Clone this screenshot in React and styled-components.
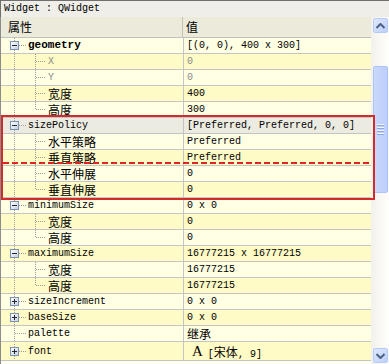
import React from "react"
import styled, { createGlobalStyle } from "styled-components"

const GlobalStyle = createGlobalStyle`
  html, body {
    margin: 0;
    padding: 0;
    background: #ece9d8;
  }
  body {
    width: 389px;
    height: 364px;
    overflow: hidden;
    font-family: "Liberation Mono", "Noto Sans CJK SC", monospace;
  }
`

const rows = [
  { name: "geometry", value: "[(0, 0), 400 x 300]", level: 0, kids: "open", bold: true },
  { name: "X", value: "0", level: 1, disabled: true },
  { name: "Y", value: "0", level: 1, disabled: true },
  { name: "宽度", value: "400", level: 1, cjk: true },
  { name: "高度", value: "300", level: 1, cjk: true, last: true },
  { name: "sizePolicy", value: "[Preferred, Preferred, 0, 0]", level: 0, kids: "open", selected: true },
  { name: "水平策略", value: "Preferred", level: 1, cjk: true },
  { name: "垂直策略", value: "Preferred", level: 1, cjk: true },
  { name: "水平伸展", value: "0", level: 1, cjk: true },
  { name: "垂直伸展", value: "0", level: 1, cjk: true, last: true },
  { name: "minimumSize", value: "0 x 0", level: 0, kids: "open" },
  { name: "宽度", value: "0", level: 1, cjk: true },
  { name: "高度", value: "0", level: 1, cjk: true, last: true },
  { name: "maximumSize", value: "16777215 x 16777215", level: 0, kids: "open" },
  { name: "宽度", value: "16777215", level: 1, cjk: true },
  { name: "高度", value: "16777215", level: 1, cjk: true, last: true },
  { name: "sizeIncrement", value: "0 x 0", level: 0, kids: "closed" },
  { name: "baseSize", value: "0 x 0", level: 0, kids: "closed" },
  { name: "palette", value: "继承", level: 0, cjkValue: true },
  { name: "font", value: "font", level: 0, kids: "closed", tall: true },
]

function Branch({ level, kids, last }) {
  const dot = { stroke: "#a0a0a0", strokeWidth: 1, strokeDasharray: "1 1" }
  if (level === 0) {
    return (
      <BranchSvg width="26" height="15" viewBox="0 0 26 15">
        <line x1="13.5" y1="0" x2="13.5" y2="15" {...dot} />
        <line x1="14" y1="7.5" x2="25" y2="7.5" {...dot} />
        {kids && (
          <g>
            <defs>
              <linearGradient id="bx" x1="0" y1="0" x2="1" y2="1">
                <stop offset="0" stopColor="#ffffff" />
                <stop offset="1" stopColor="#c6cfdb" />
              </linearGradient>
            </defs>
            <rect x="9.5" y="3.5" width="8" height="8" fill="url(#bx)" stroke="#7a94b4" />
            <rect x="11" y="7" width="5" height="1" fill="#1e2a3a" />
            {kids === "closed" && <rect x="13" y="5" width="1" height="5" fill="#1e2a3a" />}
          </g>
        )}
      </BranchSvg>
    )
  }
  return (
    <BranchSvg width="46" height="15" viewBox="0 0 46 15">
      <line x1="13.5" y1="0" x2="13.5" y2="15" {...dot} />
      <line x1="34.5" y1="0" x2="34.5" y2={last ? 7.5 : 15} {...dot} />
      <line x1="35" y1="7.5" x2="45" y2="7.5" {...dot} />
    </BranchSvg>
  )
}

export default function App() {
  return (
    <Panel>
      <GlobalStyle />
      <TitleBar>Widget : QWidget</TitleBar>
      <Body>
        <Tree>
          <Header>
            <HeaderCell $w={183}>属性</HeaderCell>
            <HeaderCell>值</HeaderCell>
          </Header>
          {rows.map((r, i) => (
            <Row key={i} $tone={r.selected ? "sel" : i % 2 ? "dark" : "light"} $tall={r.tall}>
              <NameCell>
                <Branch level={r.level} kids={r.kids} last={r.last} />
                <Name $cjk={r.cjk} $bold={r.bold} $disabled={r.disabled}>{r.name}</Name>
              </NameCell>
              <ValueCell $disabled={r.disabled}>
                {r.name === "font" ? (
                  <>
                    <FontGlyph>A</FontGlyph>
                    <span>[<Cjk>宋体</Cjk>, 9]</span>
                  </>
                ) : r.cjkValue ? (
                  <Cjk>{r.value}</Cjk>
                ) : (
                  r.value
                )}
              </ValueCell>
            </Row>
          ))}
        </Tree>
        <ScrollBar>
          <ScrollButton>
            <svg width="9" height="6" viewBox="0 0 9 6">
              <path d="M0.5 5 L4.5 1 L8.5 5" fill="none" stroke="#4d6185" strokeWidth="2" />
            </svg>
          </ScrollButton>
          <Track>
            <Thumb>
              <Grip />
              <Grip />
              <Grip />
              <Grip />
            </Thumb>
          </Track>
          <ScrollButton>
            <svg width="9" height="6" viewBox="0 0 9 6">
              <path d="M0.5 1 L4.5 5 L8.5 1" fill="none" stroke="#4d6185" strokeWidth="2" />
            </svg>
          </ScrollButton>
        </ScrollBar>
      </Body>
      <Highlight />
      <DashLine width="369" height="2">
        <line x1="0" y1="1" x2="369" y2="1" stroke="#e02424" strokeWidth="2" strokeDasharray="6 3" />
      </DashLine>
    </Panel>
  )
}

const Panel = styled.div`
  position: relative;
  width: 389px;
  height: 364px;
  display: flex;
  flex-direction: column;
  overflow: hidden;
  background: #ece9d8;
`

const TitleBar = styled.div`
  height: 16px;
  line-height: 16px;
  padding-left: 3px;
  border-top: 1px solid #6f6f6f;
  border-left: 1px solid #6f6f6f;
  background: #efeee8;
  font-size: 10px;
  color: #000;
  white-space: pre;
`

const Body = styled.div`
  flex: 1;
  display: flex;
  min-height: 0;
`

const Tree = styled.div`
  width: 370px;
  border-left: 1px solid #8c8c8c;
  display: flex;
  flex-direction: column;
  background: #fffff0;
`

const Header = styled.div`
  display: flex;
  height: 20px;
  border-bottom: 1px solid #c0c0c0;
  background: #ebeadb;
`

const HeaderCell = styled.div`
  ${(p) => (p.$w ? `width: ${p.$w - 1}px;` : "flex: 1;")}
  padding-left: ${(p) => (p.$w ? 7 : 3)}px;
  box-sizing: border-box;
  border-right: ${(p) => (p.$w ? "1px solid #c5c2b2" : "none")};
  font-family: "Noto Sans CJK SC", sans-serif;
  font-size: 12px;
  line-height: 20px;
  color: #000;
`

const toneColor = {
  light: "#ffffe4",
  dark: "#fffbc6",
  sel: "#ecebe1",
}

const Row = styled.div`
  display: flex;
  flex-shrink: 0;
  height: ${(p) => (p.$tall ? 18 : 15)}px;
  border-bottom: 1px solid #c4c4c4;
  background: ${(p) => toneColor[p.$tone]};
`

const NameCell = styled.div`
  width: 182px;
  display: flex;
  align-items: center;
  border-right: 1px solid #c4c4c4;
  overflow: hidden;
`

const BranchSvg = styled.svg`
  flex-shrink: 0;
  display: block;
`

const Name = styled.span`
  padding-left: 1px;
  font-family: ${(p) => (p.$cjk ? '"Noto Sans CJK SC", sans-serif' : '"Liberation Mono", monospace')};
  font-size: ${(p) => (p.$cjk ? 12 : p.$bold ? 11 : 10)}px;
  font-weight: ${(p) => (p.$bold ? 700 : 400)};
  color: ${(p) => (p.$disabled ? "#8a8a8a" : "#000")};
  line-height: 15px;
  white-space: pre;
`

const ValueCell = styled.div`
  flex: 1;
  display: flex;
  align-items: center;
  padding-left: 3px;
  font-family: "Liberation Mono", monospace;
  font-size: 10px;
  color: ${(p) => (p.$disabled ? "#8a8a8a" : "#000")};
  white-space: pre;
`

const Cjk = styled.span`
  font-family: "Noto Sans CJK SC", sans-serif;
  font-size: 12px;
`

const FontGlyph = styled.span`
  font-family: "Liberation Serif", serif;
  font-size: 15px;
  margin: 0 5px 0 5px;
`

const ScrollBar = styled.div`
  width: 18px;
  display: flex;
  flex-direction: column;
  background: linear-gradient(to right, #f3f1ec, #fefefb);
`

const ScrollButton = styled.div`
  width: 15px;
  height: 15px;
  margin: 1px 1px 1px 2px;
  display: flex;
  align-items: center;
  justify-content: center;
  border: 1px solid #b7cbf7;
  border-radius: 2px;
  box-sizing: border-box;
  background: linear-gradient(135deg, #e0e9fe, #bccffb);
`

const Track = styled.div`
  flex: 1;
  display: flex;
  flex-direction: column;
  padding-top: 32px;
  padding-bottom: 154px;
`

const Thumb = styled.div`
  flex: 1;
  margin-left: 2px;
  margin-right: 1px;
  border: 1px solid #aec3f6;
  border-radius: 2px;
  background: linear-gradient(to right, #c9d8fd, #bccffb);
  display: flex;
  flex-direction: column;
  align-items: center;
  justify-content: center;
  gap: 1px;
`

const Grip = styled.div`
  width: 7px;
  height: 1px;
  background: #eef3fe;
  border-bottom: 1px solid #8ca6e6;
`

const Highlight = styled.div`
  position: absolute;
  left: 1px;
  top: 115px;
  width: 374px;
  height: 85px;
  box-sizing: border-box;
  border: 2px solid #d42a2a;
  pointer-events: none;
`

const DashLine = styled.svg`
  position: absolute;
  left: 3px;
  top: 162px;
  display: block;
`
